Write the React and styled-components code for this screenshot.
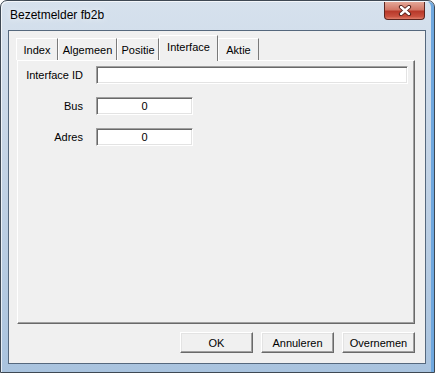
import styled, { createGlobalStyle } from "styled-components";

const GlobalStyle = createGlobalStyle`
    body {
        margin: 0;
        background: #ffffff;
        font-family: "Liberation Sans", Arial, sans-serif;
    }
`

const tabs = [
    { label: "Index", width: 42 },
    { label: "Algemeen", width: 59 },
    { label: "Positie", width: 42 },
    { label: "Interface", width: 59, active: true },
    { label: "Aktie", width: 41 },
]

export default function App() {
    return (
        <>
            <GlobalStyle />
            <Window>
                <TitleBar>
                    <Title>Bezetmelder fb2b</Title>
                    <CloseButton>
                        <svg width="14" height="11" viewBox="0 0 14 11">
                            <path d="M3 2 L11 9 M11 2 L3 9" stroke="#4a1a14" strokeWidth="4.2" strokeLinecap="round" />
                            <path d="M3 2 L11 9 M11 2 L3 9" stroke="#ffffff" strokeWidth="2.4" strokeLinecap="round" />
                        </svg>
                    </CloseButton>
                </TitleBar>

                <Client>
                    <TabRow>
                        {tabs.map((t) => (
                            <Tab key={t.label} $width={t.width} $active={t.active}>
                                {t.label}
                            </Tab>
                        ))}
                    </TabRow>

                    <Panel>
                        <Form>
                            <Label>Interface ID</Label>
                            <Field readOnly defaultValue="" />
                            <Label>Bus</Label>
                            <Field readOnly defaultValue="0" $width="97px" />
                            <Label>Adres</Label>
                            <Field readOnly defaultValue="0" $width="97px" />
                        </Form>
                    </Panel>

                    <Footer>
                        <Button>OK</Button>
                        <Button>Annuleren</Button>
                        <Button>Overnemen</Button>
                    </Footer>
                </Client>
            </Window>
        </>
    )
}

const Window = styled.div`
    width: 435px;
    height: 373px;
    box-sizing: border-box;
    border: 1px solid #3e4853;
    border-radius: 7px 7px 0 0;
    background: linear-gradient(to bottom, #d6e1ed 0%, #c3d3e5 45%, #a9c3de 100%);
    box-shadow: inset 1px 1px 0 rgba(255, 255, 255, 0.7), inset -3px 0 0 #6fa8df;
    padding: 0 8px 8px 7px;
    display: flex;
    flex-direction: column;
`
const TitleBar = styled.div`
    height: 29px;
    display: flex;
    justify-content: space-between;
    align-items: flex-start;
    padding: 0 1px 0 2px;
`
const Title = styled.div`
    font-size: 12px;
    color: #000000;
    line-height: 29px;
    text-shadow: 0 0 6px rgba(255, 255, 255, 0.9);
`
const CloseButton = styled.div`
    width: 41px;
    height: 18px;
    box-sizing: border-box;
    margin-top: 1px;
    border: 1px solid #5c2620;
    border-top: none;
    border-radius: 0 0 4px 4px;
    background: linear-gradient(to bottom, #e3a797 0%, #d27766 45%, #b8392a 55%, #c9513f 85%, #e0806c 100%);
    display: flex;
    align-items: center;
    justify-content: center;
`
const Client = styled.div`
    flex: 1;
    background: #f0f0f0;
    border: 1px solid #55687d;
    display: flex;
    flex-direction: column;
    padding: 0 10px 0 8px;
`
const TabRow = styled.div`
    height: 29px;
    display: flex;
    align-items: flex-end;
    margin-left: -1px;
`
const Tab = styled.div`
    width: ${(p) => p.$width}px;
    box-sizing: border-box;
    height: ${(p) => (p.$active ? "26px" : "22px")};
    margin-bottom: ${(p) => (p.$active ? "-1px" : "0")};
    padding-bottom: ${(p) => (p.$active ? "3px" : "0")};
    position: relative;
    z-index: ${(p) => (p.$active ? 1 : 0)};
    background: #f0f0f0;
    border-top: 1px solid #ffffff;
    border-left: 1px solid #ffffff;
    border-right: 1px solid #7a7a7a;
    font-size: 11px;
    color: #000000;
    display: flex;
    align-items: center;
    justify-content: center;
`
const Panel = styled.div`
    flex: 1;
    border-top: 1px solid #ffffff;
    border-left: 1px solid #ffffff;
    border-right: 1px solid #696969;
    border-bottom: 1px solid #696969;
    box-shadow: inset -1px -1px 0 #a0a0a0;
    padding: 5px 6px 0 6px;
`
const Form = styled.div`
    display: grid;
    grid-template-columns: 59px 1fr;
    column-gap: 13px;
    row-gap: 13px;
    align-items: center;
`
const Label = styled.div`
    font-size: 11px;
    color: #000000;
    text-align: right;
`
const Field = styled.input`
    width: ${(p) => p.$width || "100%"};
    height: 18px;
    box-sizing: border-box;
    margin: 0;
    padding: 0;
    border: 1px solid;
    border-color: #a0a0a0 #ffffff #ffffff #a0a0a0;
    box-shadow: inset 1px 1px 0 #696969, inset -1px -1px 0 #e3e3e3;
    background: #ffffff;
    font-family: "Liberation Sans", Arial, sans-serif;
    font-size: 11px;
    color: #000000;
    text-align: center;
    outline: none;
`
const Footer = styled.div`
    display: flex;
    justify-content: flex-end;
    gap: 8px;
    padding: 8px 0 10px 0;
`
const Button = styled.button`
    width: 73px;
    height: 21px;
    box-sizing: border-box;
    margin: 0;
    padding: 0;
    border: 1px solid;
    border-color: #ffffff #696969 #696969 #ffffff;
    box-shadow: inset -1px -1px 0 #a0a0a0, inset 1px 1px 0 #e3e3e3;
    background: #f0f0f0;
    font-family: "Liberation Sans", Arial, sans-serif;
    font-size: 11px;
    color: #000000;
`
